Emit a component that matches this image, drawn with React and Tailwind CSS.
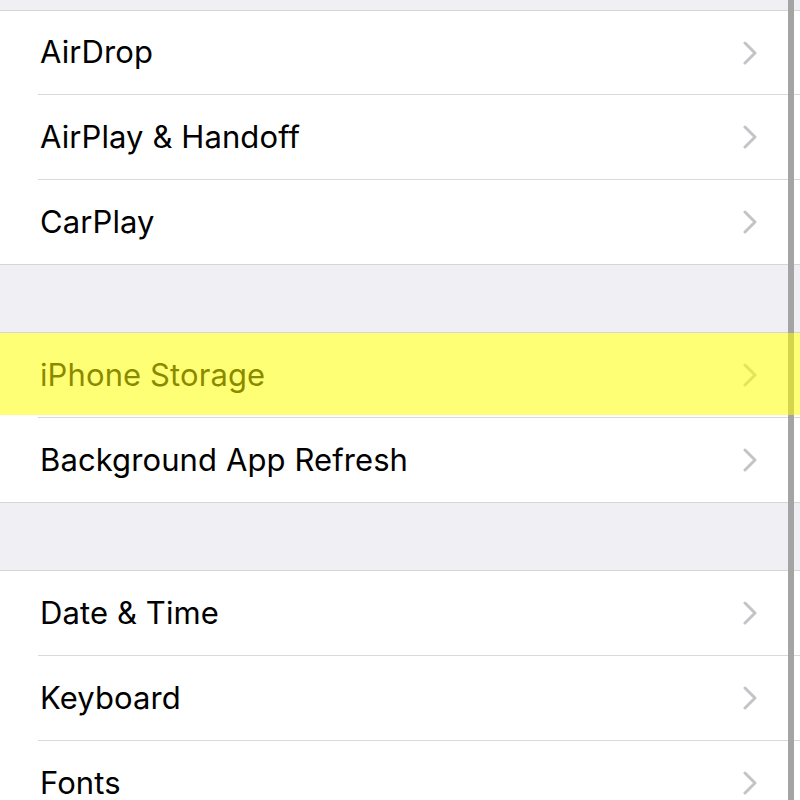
import React from "react";

const groups = [
  ["AirDrop", "AirPlay & Handoff", "CarPlay"],
  ["iPhone Storage", "Background App Refresh"],
  ["Date & Time", "Keyboard", "Fonts"],
];

function Chevron() {
  return (
    <svg width="14" height="24" viewBox="0 0 14 24" className="shrink-0">
      <polyline
        points="2,2 12,12 2,22"
        fill="none"
        stroke="#c4c4c8"
        strokeWidth="3"
        strokeLinecap="round"
        strokeLinejoin="round"
      />
    </svg>
  );
}

function Row({ label, last, highlight, first }) {
  return (
    <div className="relative bg-white">
      <div
        className={`flex items-center justify-between pl-[40px] pr-[43px] ${
          first ? "h-[83px]" : "h-[84px]"
        }`}
      >
        <span className="text-[31px] text-black tracking-[0.1px]">{label}</span>
        <Chevron />
      </div>
      {!last && <div className="ml-[38px] h-px bg-[#d9d9dd]" />}
      {highlight && (
        <div className="absolute left-0 right-0 top-0 h-[82px] bg-[#ffff00]/[0.54] z-20" />
      )}
    </div>
  );
}

export default function App() {
  return (
    <div
      className="relative w-[800px] h-[800px] overflow-hidden bg-[#efeff4]"
      style={{ fontFamily: "Inter, 'Noto Sans', sans-serif" }}
    >
      <div className="h-[10px]" />
      {groups.map((items, gi) => (
        <div key={gi}>
          {gi > 0 && <div className="h-[67px]" />}
          <div className="border-t border-b border-[#d6d6da]">
            {items.map((label, i) => (
              <Row
                key={label}
                label={label}
                first={i === 0 && gi === 0}
                last={i === items.length - 1}
                highlight={label === "iPhone Storage"}
              />
            ))}
          </div>
        </div>
      ))}
      {/* scroll indicator */}
      <div className="absolute top-0 bottom-0 left-[788px] w-[6px] bg-[#a4a4a4] z-10" />
    </div>
  );
}
